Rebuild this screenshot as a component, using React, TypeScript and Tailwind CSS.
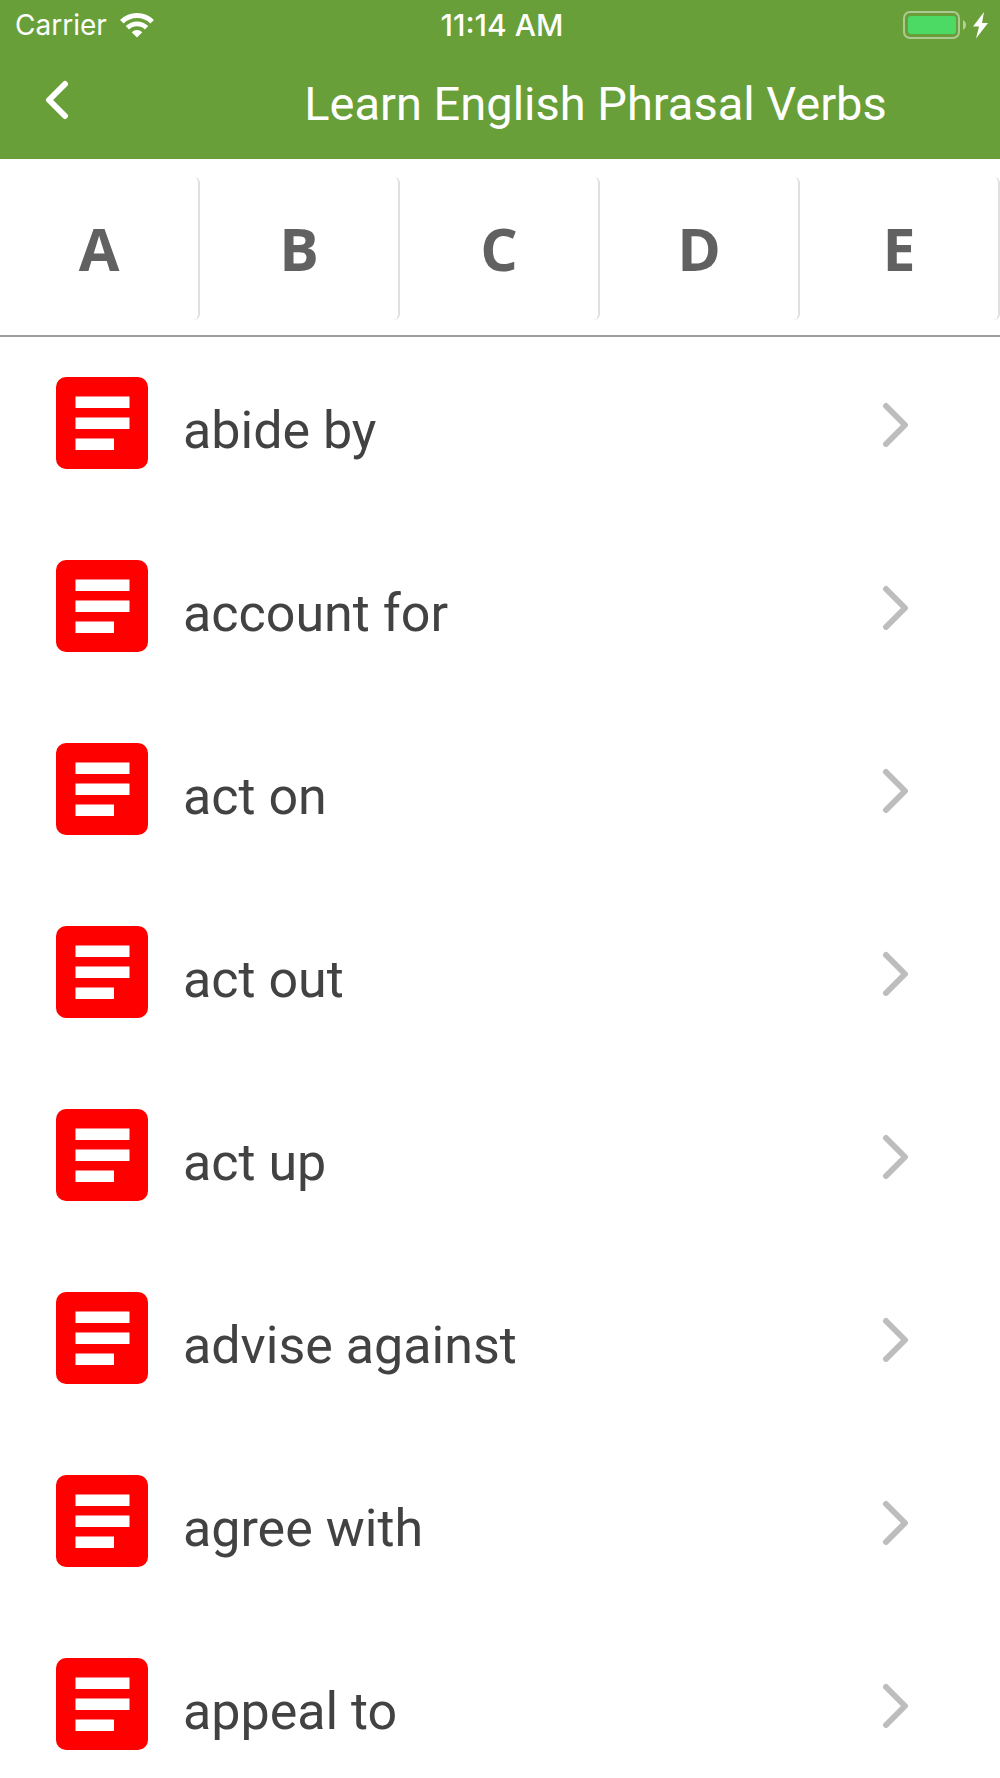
import React from 'react';

interface PhrasalVerb {
    id: number;
    title: string;
}

const letters = ['A', 'B', 'C', 'D', 'E'];

const verbs: PhrasalVerb[] = [
    { id: 1, title: 'abide by' },
    { id: 2, title: 'account for' },
    { id: 3, title: 'act on' },
    { id: 4, title: 'act out' },
    { id: 5, title: 'act up' },
    { id: 6, title: 'advise against' },
    { id: 7, title: 'agree with' },
    { id: 8, title: 'appeal to' }
];

const WifiIcon = () => (
    <svg width="34" height="25" viewBox="0 0 34 25" fill="none" aria-hidden="true">
        <path d="M1.8 8.8 A21.6 21.6 0 0 1 32.2 8.8" stroke="white" strokeWidth="5" />
        <path d="M7.4 14.8 A13.6 13.6 0 0 1 26.6 14.8" stroke="white" strokeWidth="4.8" />
        <path d="M17 24.5 L11.7 19.2 A7.5 7.5 0 0 1 22.3 19.2 Z" fill="white" />
    </svg>
);

const BatteryIcon = () => (
    <svg width="86" height="28" viewBox="0 0 86 28" fill="none" aria-hidden="true">
        <rect x="1" y="1" width="55" height="26" rx="6" stroke="white" strokeOpacity="0.45" strokeWidth="2" />
        <rect x="5" y="5" width="48" height="18" rx="3" fill="#4cd964" />
        <path d="M60 9 C64 11 64 17 60 19 Z" fill="white" fillOpacity="0.5" />
        <path d="M81 1 L70 15.5 H76 L73 27.5 L85 12 H79 Z" fill="white" />
    </svg>
);

const StatusBar = () => (
    <div className="grid grid-cols-3 items-center h-[50px] pl-[15px] pr-[11px] font-['Inter',sans-serif] text-[28px] leading-8 text-white">
        <div className="flex items-center gap-[13px]">
            <span>Carrier</span>
            <WifiIcon />
        </div>
        <span className="text-center text-[30px] font-medium">11:14 AM</span>
        <div className="flex justify-end">
            <BatteryIcon />
        </div>
    </div>
);

const Header = () => (
    <header className="bg-[#689f38]">
        <StatusBar />
        <div className="flex items-center h-[109px] pb-0.5">
            <button type="button" aria-label="Back" className="flex items-center justify-center w-[114px] h-[96px] pb-2">
                <svg width="24" height="40" viewBox="0 0 24 40" fill="none" aria-hidden="true">
                    <path d="M20 4 L4 20 L20 36" stroke="white" strokeWidth="6" strokeLinecap="round" strokeLinejoin="round" />
                </svg>
            </button>
            <h1 className="flex-1 pl-[77px] text-center text-[47px] leading-[56px] text-white">
                Learn English Phrasal Verbs
            </h1>
        </div>
    </header>
);

const LetterTabs = () => (
    <nav className="grid grid-cols-5 pt-[18px] pb-[15px] border-b-2 border-[#9e9e9e]">
        {letters.map(letter => (
            <button
                key={letter}
                type="button"
                className="h-[143px] pb-0.5 border-r-2 border-[#e0e0e0] rounded-r-md font-['Open_Sans',sans-serif] text-[59px] leading-[64px] font-bold text-[#616161]"
            >
                {letter}
            </button>
        ))}
    </nav>
);

const VerbRow: React.FC<{ verb: PhrasalVerb }> = ({ verb }) => (
    <li>
        <a href={`#verb-${verb.id}`} className="flex items-center h-[92px] pl-14 pr-[90px]">
            <svg width="92" height="92" viewBox="0 0 92 92" aria-hidden="true">
                <rect width="92" height="92" rx="10" fill="#ff0000" />
                <path d="M19.5 19.5 H73.5 V31 H19.5 Z M19.5 40.5 H73.5 V52 H19.5 Z M19.5 61.5 H58 V73 H19.5 Z" fill="white" />
            </svg>
            <span className="flex-1 pl-[35px] pt-4 text-[52px] leading-[60px] text-[#424242]">{verb.title}</span>
            <svg width="28" height="48" viewBox="0 0 28 48" fill="none" aria-hidden="true">
                <path d="M4 7 L23 26 L4 45" stroke="#bdbdbd" strokeWidth="6" strokeLinecap="round" strokeLinejoin="round" />
            </svg>
        </a>
    </li>
);

export default function App() {
    return (
        <div className="min-h-screen bg-white font-['Roboto',sans-serif]">
            <Header />
            <LetterTabs />
            <main>
                <ul className="flex flex-col gap-[91px] pt-10">
                    {verbs.map(verb => (
                        <VerbRow key={verb.id} verb={verb} />
                    ))}
                </ul>
            </main>
        </div>
    );
}
